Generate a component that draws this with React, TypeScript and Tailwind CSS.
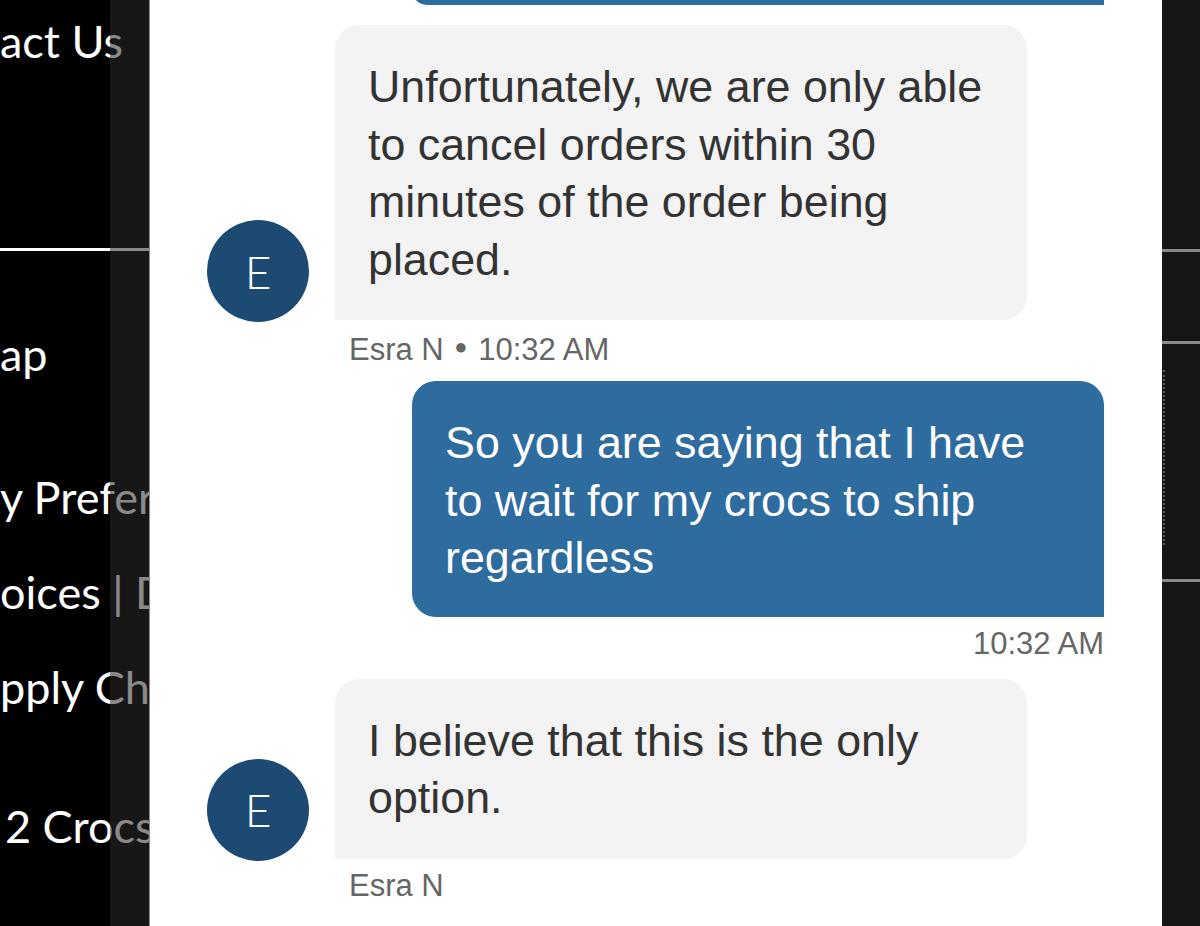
const footerLinks = [
  { text: 'act Us', cls: 'mt-[11px]' },
  { text: 'ap', cls: 'mt-[73px]' },
  { text: 'y Preferences', cls: 'mt-[83px]' },
  { text: 'oices | Do Not Sell', cls: 'mt-[35px]' },
  { text: 'pply Chain', cls: 'mt-[35px]' },
  { text: '2 Crocs', cls: 'mt-[79px] pl-[5px]' },
];

function Avatar() {
  return (
    <div className="mb-[-2px] flex h-[102px] w-[102px] shrink-0 items-center justify-center rounded-full bg-[#1c4a72] font-['Lato',sans-serif] text-[46px] font-light text-white">
      E
    </div>
  );
}

function AgentBubble({ lines }: { lines: string[] }) {
  return (
    <div className="flex items-end gap-[26px]">
      <Avatar />
      <div className="w-[692px] rounded-[24px] rounded-bl-none bg-[#f3f3f3] pl-[33px] pt-[33px] pb-[32px] text-[44.8px] leading-[57.5px] text-[#333333]">
        {lines.map((l) => (
          <div key={l} className="whitespace-nowrap">{l}</div>
        ))}
      </div>
    </div>
  );
}

function Meta({ children, right }: { children: React.ReactNode; right?: boolean }) {
  return (
    <div className={`h-[36px] text-[31px] leading-[36px] text-[#666666] ${right ? 'text-right' : 'pl-[142px]'}`}>
      {children}
    </div>
  );
}

export default function App() {
  return (
    <div className="flex h-[926px] w-[1200px] overflow-hidden bg-black font-['Liberation_Sans',Arial,sans-serif]">
      <aside className="relative w-[150px] shrink-0 overflow-hidden bg-black font-['Lato',sans-serif] text-[45px] text-white">
        {footerLinks.map((f, i) => (
          <div key={i}>
            <div className={`${f.cls} h-[60px] whitespace-pre leading-[60px]`}>{f.text}</div>
            {i === 0 && <div className="mt-[177px] h-[3px] bg-white" />}
          </div>
        ))}
        <div className="absolute inset-y-0 right-0 w-[40px] border-r border-[#8c8c8c] bg-[rgba(41,41,41,0.55)]" />
      </aside>

      <main className="w-[1012px] shrink-0 overflow-hidden bg-white pl-[57px] pr-[58px]">
        <div className="ml-[205px] mt-[-25px] h-[30px] w-[692px] rounded-[24px] rounded-br-none bg-[#2e6b9e]" />

        <div className="mt-[20px]">
          <AgentBubble
            lines={[
              'Unfortunately, we are only able',
              'to cancel orders within 30',
              'minutes of the order being',
              'placed.',
            ]}
          />
        </div>
        <div className="mt-[9px]">
          <Meta>
            Esra N <span className="mx-[2px] align-[6px] text-[22px]">●</span> 10:32 AM
          </Meta>
        </div>

        <div className="mt-[16px] flex justify-end">
          <div className="w-[692px] rounded-[24px] rounded-br-none bg-[#2e6b9e] pl-[33px] pt-[33px] pb-[30px] text-[44.8px] leading-[57.5px] text-white">
            <div className="whitespace-nowrap">So you are saying that I have</div>
            <div className="whitespace-nowrap">to wait for my crocs to ship</div>
            <div className="whitespace-nowrap">regardless</div>
          </div>
        </div>
        <div className="mt-[9px]">
          <Meta right>10:32 AM</Meta>
        </div>

        <div className="mt-[17px]">
          <AgentBubble lines={['I believe that this is the only', 'option.']} />
        </div>
        <div className="mt-[9px]">
          <Meta>Esra N</Meta>
        </div>
      </main>

      <aside className="relative flex-1 bg-[#161616]">
        <div className="mt-[249px] h-[3px] bg-[#8a8a8a]" />
        <div className="mt-[89px] h-[3px] bg-[#8a8a8a]" />
        <div className="ml-[1px] mt-[26px] h-[175px] w-[2px] border-l-2 border-dotted border-[#5a5a5a]" />
        <div className="mt-[34px] h-[3px] bg-[#8a8a8a]" />
      </aside>
    </div>
  );
}
